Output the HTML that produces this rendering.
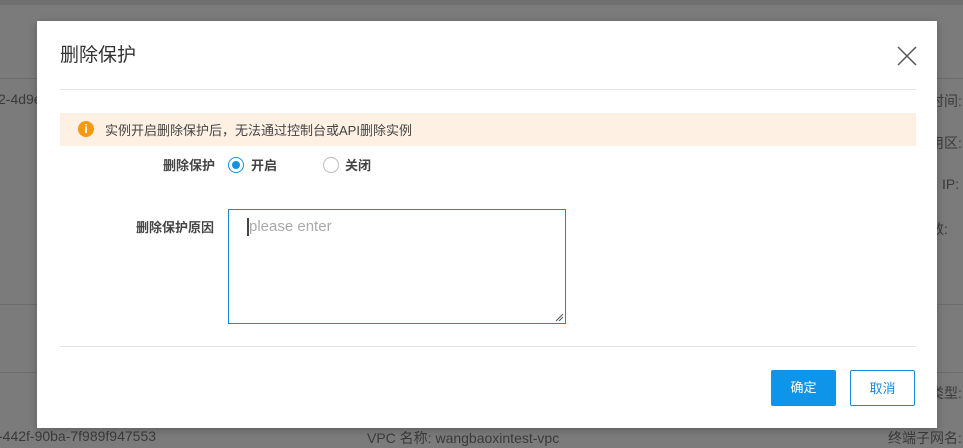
<!DOCTYPE html>
<html><head><meta charset="utf-8"><style>
*{margin:0;padding:0;box-sizing:border-box}
body{width:963px;height:442px;overflow:hidden;background:#7b7b7b;font-family:"Liberation Sans","Noto Sans CJK SC",sans-serif;position:relative}
.bgt{position:absolute;color:#3a3a3a;font-size:14px;white-space:nowrap}
.ln{position:absolute;left:0;width:963px;height:1px;background:#6c6c6c}
.dlg{position:absolute;left:37px;top:21px;width:900px;height:407px;background:#fff;box-shadow:0 2px 8px rgba(0,0,0,.25)}
.t{position:absolute;left:23px;top:19px;font-size:19px;color:#333}
.hr{position:absolute;left:23px;width:856px;height:1px;background:#e6e6e6}
.al{position:absolute;left:23px;top:92px;width:856px;height:33px;background:#fef1e4}
.ic{position:absolute;left:18px;top:8px;width:16px;height:16px;border-radius:50%;background:#f7990a;color:#fff;font-size:12px;font-weight:bold;text-align:center;line-height:16px}
.at{position:absolute;left:45px;top:7px;font-size:13px;color:#444}
.lb{position:absolute;font-size:13px;font-weight:bold;color:#444}
.rd{position:absolute;width:16px;height:16px;border-radius:50%;border:1px solid #bbb}
.rd.on{border-color:#1890e0}
.rd.on::after{content:"";position:absolute;left:3px;top:3px;width:8px;height:8px;border-radius:50%;background:#1890e0}
.ta{position:absolute;left:191px;top:188px;width:338px;height:115px;border:1px solid #1a88d8}
.btn{position:absolute;top:349px;width:65px;height:36px;font-size:13px;text-align:center;line-height:36px;border-radius:2px}
</style></head><body>
<div style="position:absolute;left:0;top:0;width:963px;height:5px;background:#707070"></div>
<div class="ln" style="top:78px"></div>
<div class="ln" style="top:304px"></div>
<div class="ln" style="top:372px"></div>
<div class="bgt" style="left:-2px;top:91px">2-4d9e</div>
<div class="bgt" style="left:930px;top:91px">时间:</div>
<div class="bgt" style="left:930px;top:133px">用区:</div>
<div class="bgt" style="left:942px;top:176px">IP:</div>
<div class="bgt" style="left:930px;top:219px">数:</div>
<div class="bgt" style="left:930px;top:383px">类型:</div>
<div class="bgt" style="left:-2px;top:428px">-442f-90ba-7f989f947553</div>
<div class="bgt" style="left:367px;top:428px">VPC 名称: wangbaoxintest-vpc</div>
<div class="bgt" style="left:888px;top:428px">终端子网名:</div>
<div class="dlg">
<div class="t">删除保护</div>
<svg style="position:absolute;left:860px;top:25px" width="20" height="20" viewBox="0 0 20 20"><path d="M1 1L19 19M19 1L1 19" stroke="#555" stroke-width="1.5"/></svg>
<div class="hr" style="top:68px"></div>
<div class="al"><div class="ic">i</div><div class="at">实例开启删除保护后，无法通过控制台或API删除实例</div></div>
<div class="lb" style="left:126px;top:134px">删除保护</div>
<div class="rd on" style="left:191px;top:136px"></div>
<div class="lb" style="left:214px;top:134px">开启</div>
<div class="rd" style="left:286px;top:136px"></div>
<div class="lb" style="left:308px;top:134px">关闭</div>
<div class="lb" style="left:99px;top:196px">删除保护原因</div>
<div class="ta">
<div style="position:absolute;left:18px;top:8px;width:2px;height:18px;background:#444"></div>
<div style="position:absolute;left:20px;top:8px;font-size:15px;color:#aaa">please enter</div>
<svg style="position:absolute;right:1px;bottom:1px" width="9" height="9"><path d="M1 8L8 1M4 8L8 4" stroke="#555" stroke-width="1"/></svg>
</div>
<div class="hr" style="top:325px"></div>
<div class="btn" style="left:734px;background:#0e95ea;color:#fff">确定</div>
<div class="btn" style="left:813px;border:1px solid #1a88d8;color:#1a88d8;background:#fff">取消</div>
</div>
</body></html>
